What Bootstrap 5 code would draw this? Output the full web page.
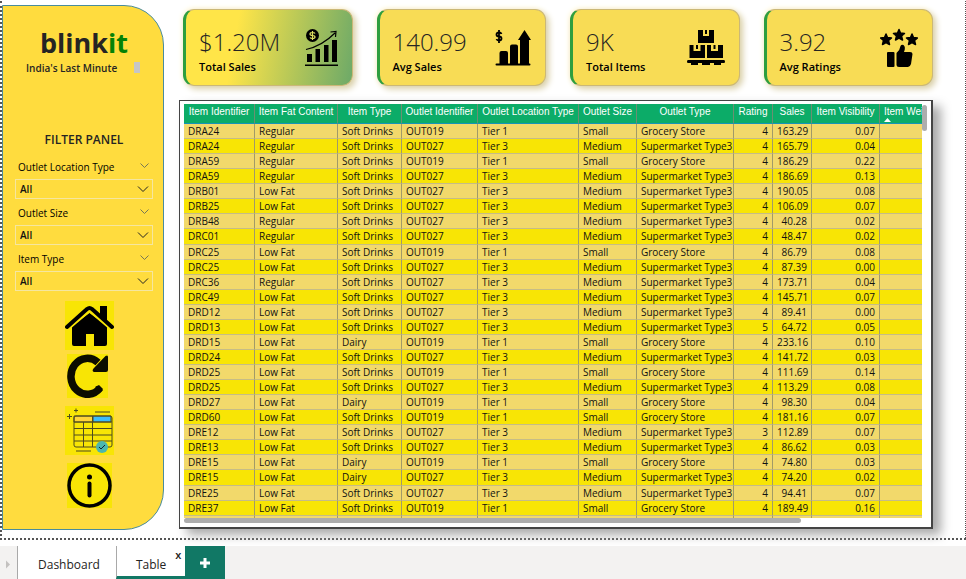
<!DOCTYPE html>
<html lang="en">
<head>
<meta charset="utf-8">
<meta name="viewport" content="width=device-width, initial-scale=1">
<title>Blinkit report</title>
<link href="https://cdn.jsdelivr.net/npm/bootstrap@5.3.0/dist/css/bootstrap.min.css" rel="stylesheet">
<style>
  body { font-family: "Open Sans", "Noto Sans", sans-serif; color: #252423; background: #fff; font-size: 10px; line-height: 15px; }
  .report { border: 0 dotted #555; border-width: 0 1px 2px 2px; padding: 5px 32px 8px 0; margin: 1px 0 6px; }
  .report main { min-width: 0; margin-left: 15px; }
  .panel { width: 162px; background: #ffdc3e; border: 1px solid #4a8c9c; border-radius: 0 40px 40px 0; padding: 18px 10px 0 12px; margin-top: -1px; }
  .brand { font-size: 27px; line-height: 38px; font-weight: 700; }
  .brand span { color: #058205; }
  .tagline { line-height: 12px; font-weight: 600; padding: 0 13px 0 11px; }
  .tagline i { width: 6px; height: 11px; background: #c6c6c6; }
  .panel h2 { font-size: 12px; line-height: 18px; font-weight: 600; margin: 57px 0 10px; }
  .slicer { margin-bottom: 6px; font-weight: 500; color: #000; }
  .slicer label { line-height: 16px; padding: 0 4px 0 3px; margin-bottom: 4px; }
  .slicer .form-select { --bs-form-select-bg-img: url("data:image/svg+xml,%3csvg xmlns='http://www.w3.org/2000/svg' viewBox='0 0 12 12'%3e%3cpath d='M1 3.5 6 8.5 11 3.5' fill='none' stroke='%23222'/%3e%3c/svg%3e"); background-color: transparent; background-size: 12px; background-position: right 3px center; border: 1px solid #f5e6a0; height: 20px; font-size: 10px; line-height: 14px; font-weight: 600; color: #111; padding: 1px 20px 1px 4px; border-radius: 0; }
  .shortcut { background: #f8e505; line-height: 0; }
  .shortcuts { padding: 4px 0 0 10px; }
  .kpi { height: 77px; background: #f8dc55; border: 1px solid #cbb877; border-left: 3px solid #2f9e3f; border-radius: 11px; box-shadow: 3px 3px 6px #d9cfa8, -1px -1px 5px #fff6d8; padding: 0 14px 0 13px; }
  .kpi-first { background: linear-gradient(100deg, #ffe548 30%, #71ab67 98%); }
  .kpi strong { display: block; font-size: 24px; line-height: 33px; font-weight: 300; margin-top: 4px; }
  .kpi span { display: block; font-size: 11px; line-height: 17px; font-weight: 600; color: #000; }
  .kpis { padding: 3px 0 0 4px; }
  .kpis .row { --bs-gutter-x: 24px; }
  .grid-frame { border: 1px solid #444; border-width: 1px 2px 2px 1px; box-shadow: 8px 6px 10px #aaa; padding: 3px 4px 4px; background: #fff; margin-top: 14px; }
  .grid-view { height: 414px; overflow: hidden; min-width: 0; }
  .items { table-layout: fixed; width: 776px; height: 427px; border-collapse: separate; border-spacing: 0; }
  .items th { font: 10px/13px "Liberation Sans", Arial, sans-serif; height: 20px; background: #0cac68; color: #fff; text-align: center; vertical-align: top; padding: 1px 2px 0; border-right: 1px solid #6b8f72; border-bottom: 1px solid #1693b8; white-space: nowrap; }
  .items td { font-weight: 500; color: #111; line-height: 14px; padding: 0 4px; border-right: 1px solid #a19a68; border-bottom: 1px solid #c6bc86; white-space: nowrap; background: #f2d96b; }
  .items tr:nth-child(even) td { background: #f8e505; }
  .items td.num { text-align: right; }
  .items th.sorted { text-align: left; padding-left: 4px; }
  .items th.sorted svg { display: block; }
  .vbar { width: 5px; height: 26px; border-radius: 3px; background: #adadad; margin-top: 1px; }
  .hbar { width: 83%; height: 5px; border-radius: 3px; background: #adadad; }
  .pages { background: #f3f2f1; height: 33px; font-size: 12px; line-height: 18px; }
  .pages a { color: #252423; background: #fff; border-left: 1px solid #a9a9a9; text-decoration: none; padding: 5px 16px 0 20px; position: relative; }
  .pages a.current { border-bottom: 3px solid #117865; padding: 8px 19px 0; }
  .pages .close-page { position: absolute; top: 1px; right: 4px; border: 0; background: none; padding: 0; font-size: 11px; font-weight: 600; line-height: 16px; color: #222; }
  .add-page { width: 40px; border: 0; background: #117865; padding: 0; }
</style>
<script src="https://cdn.jsdelivr.net/npm/bootstrap@5.3.0/dist/js/bootstrap.bundle.min.js"></script>
</head>
<body class="d-flex flex-column min-vh-100">
<div class="report d-flex flex-grow-1">
  <aside class="panel flex-shrink-0">
    <div class="brand text-center">blink<span>it</span></div>
    <div class="tagline d-flex justify-content-between"><span>India's Last Minute</span><i></i></div>
    <h2 class="text-center">FILTER PANEL</h2>
    <div class="slicer">
      <label for="location" class="d-flex justify-content-between">Outlet Location Type
        <svg width="9" height="12" fill="none" stroke="#775" aria-hidden="true"><path d="M.5 4.500 4.500 8.500 8.500 4.500"/></svg></label>
      <select id="location" class="form-select"><option>All</option></select>
    </div>
    <div class="slicer">
      <label for="size" class="d-flex justify-content-between">Outlet Size
        <svg width="9" height="12" fill="none" stroke="#775" aria-hidden="true"><path d="M.5 4.500 4.500 8.500 8.500 4.500"/></svg></label>
      <select id="size" class="form-select"><option>All</option></select>
    </div>
    <div class="slicer">
      <label for="type" class="d-flex justify-content-between">Item Type
        <svg width="9" height="12" fill="none" stroke="#775" aria-hidden="true"><path d="M.5 4.500 4.500 8.500 8.500 4.500"/></svg></label>
      <select id="type" class="form-select"><option>All</option></select>
    </div>
    <nav class="shortcuts d-flex flex-column align-items-center" aria-label="Shortcuts">
      <a href="#" class="shortcut mb-1" aria-label="Home"><svg width="49" height="49" viewBox="0 0 49 49"><path d="M7 25 24.500 12 42 25V43a2 2 0 0 1-2 2H29V33H21V45H9a2 2 0 0 1-2-2Z"/><path d="M2 26 22 9q2.500-2 5 0L47 26" fill="none" stroke="#f8e505" stroke-width="7"/><path d="M2 26 22 8q2.500-2 5 0L47 26" fill="none" stroke="#000" stroke-width="4" stroke-linecap="round"/><path d="M35 5h7v17l-7-6Z"/></svg></a>
      <a href="#" class="shortcut me-1 mb-2" aria-label="Reset"><svg width="41" height="44" viewBox="0 0 41 44"><path d="M33 34A16.500 18 0 1 1 31 8.500" fill="none" stroke="#0c0c00" stroke-width="7.500"/><path d="M38.500 2q2.500-1.500 2.500 1V16q0 2-2 2H27q-2.500-1-.500-3.500ZM32 31l4 4-2 3-6-5Z" fill="#0c0c00"/></svg></a>
      <a href="#" class="shortcut mb-2" aria-label="Table"><svg width="49" height="49" viewBox="0 0 49 49" fill="none" stroke="#4d4b20"><path d="M9 10h19v6H9Z" fill="#ffd43a"/><path d="M28 10h18v6H28Z" fill="#3cbcfa"/><rect x="9" y="10" width="38" height="31" rx="2"/><path d="M9 16h38M9 22.500h38M9 29h38M9 35h38M18.500 16v25M27.500 10v31"/><path d="M30 6h15M11 45h15M9 4.500h4M11 2.500v4M2 10.500h5M4.500 8v5"/><circle cx="37" cy="41" r="6" fill="#4cb6ae" stroke="none"/><path d="M34 41l2 2 4-4" stroke="#123"/></svg></a>
      <a href="#" class="shortcut" aria-label="Information"><svg width="45" height="45" viewBox="0 0 45 45"><circle cx="22.500" cy="22.500" r="20.500" fill="none" stroke="#000" stroke-width="3.500"/><circle cx="22.500" cy="14" r="2.500"/><path d="M22.500 20.500v12" stroke="#000" stroke-width="4" stroke-linecap="round"/></svg></a>
    </nav>
  </aside>
  <main class="flex-grow-1">
    <div class="kpis"><div class="row row-cols-4">
      <div class="col"><section class="kpi kpi-first d-flex justify-content-between align-items-center">
        <div><strong>$1.20M</strong><span>Total Sales</span></div>
        <svg width="33" height="38" viewBox="0 0 33 38"><circle cx="7.500" cy="6.500" r="6.500"/><path d="M10 4.500Q9.500 3.500 7.500 3.500 5 3.500 5 5T7.500 6.500 10 8 7.500 9.500Q5.500 9.500 5 8.500M7.500 2v9" fill="none" stroke="#dfe060" stroke-width="1.200"/><path d="M1 20.500Q17 17 30 4M25.500 3l5.500-.500L30.500 8" fill="none" stroke="#000" stroke-width="1.200"/><path d="M2 25h5v8H2ZM10.500 20h4.500v13h-4.500ZM19 16h4.500v17H19ZM27 11h5v22h-5ZM0 35.500h33v1.500H0Z"/></svg>
      </section></div>
      <div class="col"><section class="kpi d-flex justify-content-between align-items-center">
        <div><strong>140.99</strong><span>Avg Sales</span></div>
        <svg width="36" height="38" viewBox="0 0 36 38"><path d="M6.500 5Q6 3.500 4 3.500 1.500 3.500 1.500 5.500T4 7.500 6.500 9.500 4 11.500Q2 11.500 1.500 10M4 1v13" fill="none" stroke="#000" stroke-width="1.800"/><path d="M4.500 35V24q0-2 2-2H11q2 0 2 2V35ZM15 35V17.500q0-2 2-2h4q2 0 2 2V35ZM25 35V11H23L29.500 1 36 11H34V35Z"/><path d="M1.500 35.500H34.500" stroke="#000" stroke-width="2" stroke-linecap="round"/></svg>
      </section></div>
      <div class="col"><section class="kpi d-flex justify-content-between align-items-center">
        <div><strong>9K</strong><span>Total Items</span></div>
        <svg width="38" height="38" viewBox="0 0 38 38"><path d="M11 1h5v6h6V1h5v13H11ZM18 1h2v4h-2ZM2.500 16h4v6h7v-6h4.500v13H2.500ZM9 16h2v4H9ZM20 16h4v6h7v-6h5v13H20ZM26.500 16h2v4h-2ZM1 31H37q1 0 1 1.500T37 34H34v2H27V34H23v2H15V34H11v2H4V34H1Q0 34 0 32.500T1 31Z"/></svg>
      </section></div>
      <div class="col"><section class="kpi d-flex justify-content-between align-items-center">
        <div><strong>3.92</strong><span>Avg Ratings</span></div>
        <svg width="38" height="40" viewBox="0 0 38 40"><g stroke="#000" stroke-width="1.500" stroke-linejoin="round"><path d="M19 1.500 20.500 5 24.500 5.500 21.500 8 22.500 12 19 10 15.500 12 16.500 8 13.500 5.500 17.500 5ZM6 6l1.500 3.500 4 .500-3 2.500 1 4L6 14.500 2.500 16.500l1-4-3-2.500 4-.500ZM32 6l1.500 3.500 4 .500-3 2.500 1 4L32 14.500l-3.500 2 1-4-3-2.500 4-.500Z"/></g><rect x="7" y="24" width="7.500" height="15" rx="1"/><path d="M16.500 25Q20 22 20.500 18q1-2 3-1 2.500 2 .500 7h6q2.500 0 2.500 2L31 36q-1 3-3 3H19q-2.500 0-2.500-2Z"/></svg>
      </section></div>
    </div></div>
    <div class="grid-frame">
      <div class="d-flex">
        <div class="grid-view flex-grow-1">
          <table class="items">
            <colgroup><col width="71"><col width="83"><col width="64"><col width="76"><col width="101"><col width="58"><col width="97"><col width="39"><col width="39"><col width="68"><col width="80"></colgroup>
            <thead><tr><th>Item Identifier</th><th>Item Fat Content</th><th>Item Type</th><th>Outlet Identifier</th><th>Outlet Location Type</th><th>Outlet Size</th><th>Outlet Type</th><th>Rating</th><th>Sales</th><th>Item Visibility</th><th class="sorted">Item Weight<svg width="7" height="4" fill="#fff"><path d="M0 4 3.500 0 7 4Z"/></svg></th></tr></thead>
            <tbody id="rows"></tbody>
          </table>
        </div>
        <div class="vbar flex-shrink-0"></div>
      </div>
      <div class="hbar"></div>
    </div>
  </main>
</div>
<footer class="pages d-flex">
  <svg width="17" height="33" aria-hidden="true"><path d="M6 14.500v8l4-4Z" fill="#c3c1bf"/></svg>
  <a href="#" class="d-flex align-items-center">Dashboard</a>
  <a href="#" class="current d-flex align-items-center" aria-current="page">Table<button class="close-page" aria-label="Close page">x</button></a>
  <button class="add-page" aria-label="Add page"><svg width="12" height="12"><path d="M6 1v10M1 6h10" stroke="#fff" stroke-width="3"/></svg></button>
</footer>
<script>
  // item, fat content, type, outlet, rating, sales, visibility
  const data = `DRA24 R S 19 4 163.29 0.07
DRA24 R S 27 4 165.79 0.04
DRA59 R S 19 4 186.29 0.22
DRA59 R S 27 4 186.69 0.13
DRB01 L S 27 4 190.05 0.08
DRB25 L S 27 4 106.09 0.07
DRB48 R S 27 4 40.28 0.02
DRC01 R S 27 4 48.47 0.02
DRC25 L S 19 4 86.79 0.08
DRC25 L S 27 4 87.39 0.00
DRC36 R S 27 4 173.71 0.04
DRC49 L S 27 4 145.71 0.07
DRD12 L S 27 4 89.41 0.00
DRD13 L S 27 5 64.72 0.05
DRD15 L D 19 4 233.16 0.10
DRD24 L S 27 4 141.72 0.03
DRD25 L S 19 4 111.69 0.14
DRD25 L S 27 4 113.29 0.08
DRD27 L D 19 4 98.30 0.04
DRD60 L S 19 4 181.16 0.07
DRE12 L S 27 3 112.89 0.07
DRE13 L S 27 4 86.62 0.03
DRE15 L D 19 4 74.80 0.03
DRE15 L D 27 4 74.20 0.02
DRE25 L S 27 4 94.41 0.07
DRE37 L S 19 4 189.49 0.16`.split("\n").map(line => line.split(" "));
  const outlets = { 19: ["OUT019", "Tier 1", "Small", "Grocery Store"], 27: ["OUT027", "Tier 3", "Medium", "Supermarket Type3"] };
  const rows = data.map(([item, fat, type, outlet, ...nums]) => {
    const texts = [item, fat === "R" ? "Regular" : "Low Fat", type === "S" ? "Soft Drinks" : "Dairy", ...outlets[outlet]];
    return "<tr>" + texts.map(t => `<td>${t}</td>`).join("") + nums.map(n => `<td class="num">${n}</td>`).join("") + "<td></td></tr>";
  });
  rows.push("<tr>" + "<td>&nbsp;</td>".repeat(11) + "</tr>");
  document.getElementById("rows").innerHTML = rows.join("");
</script>
</body>
</html>
